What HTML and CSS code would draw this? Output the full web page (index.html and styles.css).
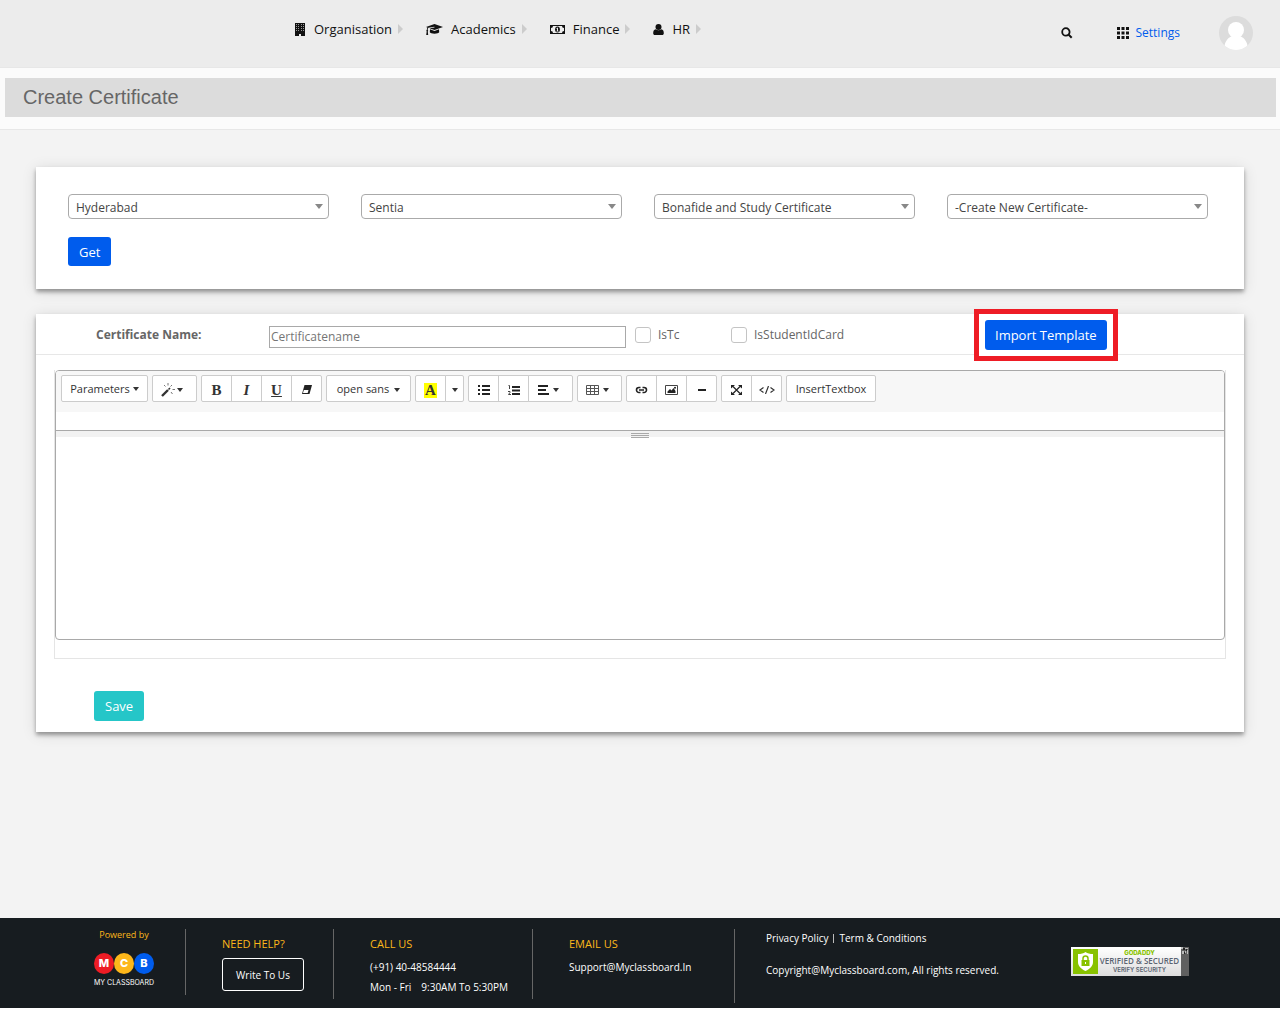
FILE: index.html
```html
<!DOCTYPE html>
<html lang="en">
<head>
    <meta charset="UTF-8">
    <meta name="viewport" content="width=device-width, initial-scale=1.0">
    <title>Create Certificate</title>
    <link rel="stylesheet" href="styles.css">
</head>
<body>
    <header class="topbar">
        <nav class="main-nav">
            <a href="#">
                <svg width="12" height="13" viewBox="0 0 12 13"><path fill="#111" d="M1 0h10v13H7v-2H5v2H1z"/><path fill="#999" d="M2 1h1v1H2zM4 1h1v1H4zM7 1h1v1H7zM9 1h1v1H9zM2 3h1v1H2zM4 3h1v1H4zM7 3h1v1H7zM9 3h1v1H9zM2 5h1v1H2zM4 5h1v1H4zM7 5h1v1H7zM9 5h1v1H9zM2 7h1v1H2zM4 7h1v1H4zM7 7h1v1H7zM9 7h1v1H9z"/></svg>
                <span>Organisation</span><i class="nav-arrow"></i>
            </a>
            <a href="#">
                <svg width="17" height="13" viewBox="0 0 17 13"><path fill="#111" d="M8.500 1L17 4 8.500 7 3.500 5.200l5-.8-.1-.6-6 1c-.6.7-.7 1.500-.7 2.300.6.3.6 1 .1 1.400L2.200 12H.2l.5-3.500C.2 8 .2 7.400.8 7.100c0-.9.200-1.800.6-2.500L0 4z"/><path fill="#111" d="M4 6.300L8.500 8 13 6.300l.2 2.900c-.5 1.900-8.900 1.900-9.400 0z"/></svg>
                <span>Academics</span><i class="nav-arrow"></i>
            </a>
            <a href="#">
                <svg width="15" height="13" viewBox="0 0 15 13"><path fill="#111" fill-rule="evenodd" d="M0 2h15v9H0zM3 3a2 2 0 0 1-2 2v3a2 2 0 0 1 2 2h9a2 2 0 0 1 2-2V5a2 2 0 0 1-2-2z"/><ellipse cx="7.500" cy="6.500" rx="2.400" ry="2.900" fill="#111"/><path fill="#ececec" d="M7 4.700h1v3h.6v.7H6.400v-.7H7V5.800h-.6v-.6z"/></svg>
                <span>Finance</span><i class="nav-arrow"></i>
            </a>
            <a href="#">
                <svg width="11" height="13" viewBox="0 0 11 13"><circle cx="5.500" cy="4" r="3" fill="#111"/><path fill="#111" d="M2.800 6.200c1.500 1.400 3.900 1.400 5.400 0 2 .2 2.600 2 2.600 4 0 1.200-.7 1.800-1.600 1.800H1.800C.9 12 .2 11.400.2 10.200c0-2 .6-3.800 2.600-4z"/></svg>
                <span>HR</span><i class="nav-arrow"></i>
            </a>
        </nav>
        <div class="topbar-right">
            <button class="icon-button" aria-label="Search">
                <svg width="12" height="12" viewBox="0 0 12 12" fill="none" stroke="#111"><circle cx="4.900" cy="4.900" r="3.700" stroke-width="1.800"/><path stroke-width="2" d="M7.700 7.700l3 3"/></svg>
            </button>
            <a class="settings" href="#">
                <svg width="12" height="12" viewBox="0 0 12 12"><path fill="#111" d="M0 0h3v3H0zM4.500 0h3v3h-3zM9 0h3v3H9zM0 4.500h3v3H0zM4.500 4.500h3v3h-3zM9 4.500h3v3H9zM0 9h3v3H0zM4.500 9h3v3h-3zM9 9h3v3H9z"/></svg>
                <span>Settings</span>
            </a>
            <svg class="avatar" width="34" height="34" viewBox="0 0 34 34"><clipPath id="round"><circle cx="17" cy="17" r="17"/></clipPath><g clip-path="url(#round)"><path fill="#dcdcdc" d="M0 0h34v34H0z"/><circle cx="17" cy="14" r="8" fill="#fff"/><path fill="#fff" d="M5 34c0-7 3-12 8-14h8c5 2 8 7 8 14z"/></g></svg>
        </div>
    </header>

    <div class="title-bar">
        <h1>Create Certificate</h1>
    </div>

    <main>
        <section class="card filter-card">
            <div class="filters">
                <div class="select-box"><select aria-label="City"><option>Hyderabad</option></select></div>
                <div class="select-box"><select aria-label="Branch"><option>Sentia</option></select></div>
                <div class="select-box"><select aria-label="Certificate type"><option>Bonafide and Study Certificate</option></select></div>
                <div class="select-box"><select aria-label="Certificate"><option>-Create New Certificate-</option></select></div>
            </div>
            <button class="btn btn-blue">Get</button>
        </section>

        <section class="card editor-card">
            <div class="name-row">
                <label class="name-label" for="certName">Certificate Name:</label>
                <input class="name-input" type="text" id="certName" placeholder="Certificatename">
                <label class="check is-tc"><input type="checkbox"><span>IsTc</span></label>
                <label class="check is-card"><input type="checkbox"><span>IsStudentIdCard</span></label>
                <div class="highlight"><button class="btn btn-blue btn-import">Import Template</button></div>
            </div>

            <div class="editor-wrap">
                <div class="editor">
                    <div class="toolbar">
                        <div class="group"><button class="w-params">Parameters<i class="caret big"></i></button></div>
                        <div class="group"><button class="w-drop" aria-label="Style">
                            <svg width="15" height="14" viewBox="0 0 15 14" stroke="#333" fill="none"><path stroke-width="2.400" d="M1 13l6-6"/><path stroke-width="1.600" d="M7.500 6.500L9 5"/><path stroke="#777" d="M3 2l1.500 1.500M7 0v2.500M11 2L9.500 3.500M11.500 6.500H14M10 9l1.500 2"/></svg><i class="caret"></i></button></div>
                        <div class="group">
                            <button class="serif">B</button>
                            <button class="serif italic">I</button>
                            <button class="serif underline">U</button>
                            <button aria-label="Clear"><svg width="10" height="10" viewBox="0 0 10 10"><path fill="#222" d="M2.500 0H10L7.500 9H0z"/><path fill="#fff" d="M1.800 5h4.700L5.700 8H1z"/></svg></button>
                        </div>
                        <div class="group"><button class="w-font">open sans<i class="caret"></i></button></div>
                        <div class="group">
                            <button class="serif"><span class="mark">A</span></button>
                            <button class="w-caret" aria-label="More colors"><i class="caret"></i></button>
                        </div>
                        <div class="group">
                            <button aria-label="Bullet list"><svg width="12" height="10" viewBox="0 0 12 10"><path fill="#222" d="M0 0h2v2H0zM0 4h2v2H0zM0 8h2v2H0zM4 0h8v2H4zM4 4h8v2H4zM4 8h8v2H4z"/></svg></button>
                            <button aria-label="Numbered list"><svg width="12" height="10" viewBox="0 0 12 10"><path fill="#222" d="M4 1h8v2H4zM4 4.500h8v2H4zM4 8h8v2H4z"/><path fill="none" stroke="#444" d="M.5.500h1V4M0 6.500h2v1L.5 9.500H3"/></svg></button>
                            <button class="w-drop" aria-label="Paragraph"><svg width="11" height="10" viewBox="0 0 11 10"><path fill="#222" d="M0 0h10v2H0zM0 4h8v2H0zM0 8h11v2H0z"/></svg><i class="caret wide"></i></button>
                        </div>
                        <div class="group"><button class="w-drop" aria-label="Table"><svg width="13" height="10" viewBox="0 0 13 10"><path fill="none" stroke="#555" d="M.5.500h12v9H.5zM0 3.500h13M0 6.500h13M4.500 0v10M8.500 0v10"/></svg><i class="caret wide"></i></button></div>
                        <div class="group">
                            <button aria-label="Link"><svg width="13" height="8" viewBox="0 0 13 8"><path fill="none" stroke="#222" stroke-width="1.600" d="M5.500 6.500H4a2.500 2.500 0 0 1 0-5h1.500M7.500 1.500H9a2.500 2.500 0 0 1 0 5H7.500M4 4h5"/></svg></button>
                            <button aria-label="Picture"><svg width="13" height="10" viewBox="0 0 13 10"><path fill="none" stroke="#444" d="M.5.500h12v9H.5z"/><path fill="#222" d="M2.500 8V6.500L5 4l1.500 1.500L8.500 3l2 3v2z"/><circle cx="10" cy="2.700" r="1" fill="#222"/></svg></button>
                            <button aria-label="Rule"><svg width="8" height="2" viewBox="0 0 8 2"><path fill="#222" d="M0 0h8v2H0z"/></svg></button>
                        </div>
                        <div class="group">
                            <button aria-label="Full screen"><svg width="11" height="10" viewBox="0 0 11 10"><path stroke="#222" stroke-width="1.200" d="M2 1.500l7 7M9 1.500l-7 7"/><path fill="#222" d="M0 0h4L0 3.600zM11 0v3.600L7 0zM0 10V6.400L4 10zM11 10H7l4-3.600z"/></svg></button>
                            <button aria-label="Code view"><svg width="16" height="8" viewBox="0 0 16 8"><path fill="none" stroke="#333" stroke-width="1.200" d="M4.500 1.500L1 4l3.500 2.500M11.500 1.500L15 4l-3.500 2.500M9.500 0l-3 8"/></svg></button>
                        </div>
                        <div class="group"><button class="w-insert">InsertTextbox</button></div>
                    </div>
                    <div class="ruler"></div>
                    <div class="resize-bar"><span></span><span></span><span></span></div>
                    <div class="edit-area" contenteditable="true"></div>
                </div>
            </div>
            <button class="btn btn-save">Save</button>
        </section>
    </main>

    <footer>
        <div class="col powered">
            <p class="small-title">Powered by</p>
            <div class="balls"><span class="red">M</span><span class="yellow">C</span><span class="blue">B</span></div>
            <p class="brand">MY CLASSBOARD</p>
        </div>
        <div class="col help">
            <h2>NEED HELP?</h2>
            <button class="write">Write To Us</button>
        </div>
        <div class="col call">
            <h2>CALL US</h2>
            <p>(+91) 40-48584444</p>
            <p class="hours"><span>Mon - Fri</span><span>9:30AM To 5:30PM</span></p>
        </div>
        <div class="col email">
            <h2>EMAIL US</h2>
            <p>Support@Myclassboard.In</p>
        </div>
        <div class="legal">
            <p><a href="#">Privacy Policy</a><i class="bar"></i><a href="#">Term &amp; Conditions</a></p>
            <p>Copyright@Myclassboard.com, All rights reserved.</p>
        </div>
        <div class="seal">
            <svg width="25" height="25" viewBox="0 0 25 25"><path fill="#88c200" d="M0 0h25v25H0z"/><path fill="#fff" d="M12.500 3c2 1.500 4.500 2 7.500 2v8c0 4-3 7-7.500 9C8 20 5 17 5 13V5c3 0 5.500-.5 7.500-2z"/><path fill="#88c200" d="M8.500 11h8v6h-8z"/><path fill="none" stroke="#88c200" stroke-width="1.500" d="M10 11V9.500a2.500 2.500 0 0 1 5 0V11"/><path fill="#fff" d="M12 13h1v2h-1z"/></svg>
            <div class="seal-text">
                <span class="seal-top">GODADDY</span>
                <span class="seal-mid">VERIFIED &amp; SECURED</span>
                <span class="seal-low">VERIFY SECURITY</span>
            </div>
            <svg class="seal-edge" width="8" height="29" viewBox="0 0 8 29"><path fill="#606060" d="M0 0h8v29H0z"/><path fill="#bbb" d="M0 0h2v2H0zM4 1h3v1H4zM1 4h2v3H1zM4 4h1v2H4zM6 3h1v4H6z"/><path fill="#222" d="M2 1h2v2H2zM5 2h1v2H5zM3 5h1v2H3z"/></svg>
        </div>
    </footer>
</body>
</html>
```
FILE: styles.css
```css
* { box-sizing: border-box; }
body {
    margin: 0;
    min-height: 100vh;
    display: flex;
    flex-direction: column;
    background-color: #f3f3f3;
    font-family: "Open Sans", sans-serif;
    font-size: 12px;
    line-height: 18px;
    color: #666;
}
h1, h2, p { margin: 0; font-weight: 400; }
a { color: inherit; text-decoration: none; }
button, input, select { font: inherit; color: inherit; margin: 0; }
button { cursor: pointer; padding: 0; }
svg { display: block; flex: none; }

/* top bar */
.topbar {
    display: flex;
    justify-content: space-between;
    height: 68px;
    padding: 0 27px 0 294px;
    background-color: #ececec;
    border-bottom: 1px solid #e7e7e7;
}
.main-nav {
    display: flex;
    gap: 23px;
    height: 58px;
    font-size: 13px;
    color: #111;
}
.main-nav a { display: flex; align-items: center; }
.main-nav span { margin: 0 6px 0 8px; }
.nav-arrow {
    border: 5px solid transparent;
    border-left-color: #ccc;
    border-right: 0;
}
.topbar-right {
    display: flex;
    align-items: center;
    height: 66px;
}
.icon-button {
    border: 0;
    background: none;
    margin-right: 44px;
}
.settings {
    display: flex;
    align-items: center;
    gap: 7px;
    margin-right: 39px;
    color: #005ced;
}

/* page title */
.title-bar {
    padding: 10px 4px 12px 5px;
    background-color: #fbfbfb;
    border-bottom: 1px solid #e7e7e7;
}
h1 {
    padding-left: 18px;
    background-color: #dcdcdc;
    font-family: "Liberation Sans", Arial, sans-serif;
    font-size: 20px;
    line-height: 39px;
}

main { flex: 1; padding: 37px 36px; }
.card {
    background-color: #fff;
    box-shadow: 0 3px 4px rgba(0, 0, 0, 0.35), 0 2px 14px rgba(0, 0, 0, 0.12);
}

/* filters */
.filter-card {
    padding: 27px 36px 23px 32px;
    margin-bottom: 25px;
}
.filters {
    display: grid;
    grid-template-columns: repeat(4, 1fr);
    gap: 32px;
    margin-bottom: 18px;
}
.select-box { position: relative; }
.select-box::after {
    content: "";
    position: absolute;
    right: 6px;
    top: 10px;
    border: 4px solid transparent;
    border-top: 5px solid #888;
    border-bottom: 0;
    pointer-events: none;
}
select {
    display: block;
    width: 100%;
    height: 25px;
    padding: 2px 7px 0;
    appearance: none;
    border: 1px solid #aaa;
    border-radius: 4px;
    background-color: #fff;
    color: #444;
}
.btn {
    display: block;
    height: 30px;
    padding: 0 11px;
    border: 0;
    border-radius: 3px;
    font-size: 13px;
    font-weight: 500;
    color: #fff;
}
.filter-card .btn { height: 29px; }
.btn-blue { background-color: #005ced; }
.btn-save {
    margin: 32px 0 0 58px;
    background-color: #25c6c8;
}

/* certificate name row */
.editor-card { padding-bottom: 11px; }
.name-row {
    display: flex;
    align-items: center;
    height: 41px;
    padding: 2px 0 0 60px;
    border-bottom: 1px solid #e7e7e7;
}
.name-label {
    width: 173px;
    font-weight: 700;
}
.name-input {
    width: 357px;
    height: 22px;
    margin-top: 3px;
    padding: 1px;
    border: 1px solid #a9a9a9;
    background-color: #fff;
}
.name-input::placeholder { color: #757575; opacity: 1; }
.check {
    display: flex;
    align-items: center;
    gap: 7px;
    margin-left: 9px;
}
.check input {
    appearance: none;
    width: 16px;
    height: 16px;
    border: 1px solid #c4c4c4;
    border-radius: 3px;
    background-color: #fff;
}
.is-tc { width: 87px; }
.is-card { width: 243px; }
.highlight {
    flex: none;
    padding: 6px;
    border: 5px solid #ee1c25;
    background-color: #fff;
}
.btn-import { padding: 0 10px; }

/* editor */
.editor-wrap {
    margin: 15px 18px 0;
    padding-bottom: 18px;
    border: 1px solid #e5e5e5;
    border-top: 0;
}
.editor {
    border: 1px solid #a9a9a9;
    border-radius: 4px;
    overflow: hidden;
}
.toolbar {
    display: flex;
    gap: 4px;
    padding: 4px 5px 10px;
    background-color: #f7f7f7;
    font-size: 11px;
    color: #333;
}
.group { display: flex; }
.toolbar button {
    display: flex;
    align-items: center;
    justify-content: center;
    width: 31px;
    height: 27px;
    border: 1px solid #ccc;
    background-color: #fff;
}
.toolbar button svg { margin-top: 2px; }
.toolbar button + button { margin-left: -1px; }
.toolbar button:first-child { border-radius: 2px 0 0 2px; }
.toolbar button:last-child { border-radius: 0 2px 2px 0; }
.toolbar button:only-child { border-radius: 2px; }
.toolbar .w-params { width: 87px; }
.toolbar .w-drop { width: 45px; padding-right: 5px; }
.toolbar .w-font { width: 85px; }
.toolbar .w-caret { width: 19px; }
.toolbar .w-insert { width: 90px; }
.toolbar .serif {
    padding-top: 3px;
    font-family: "Liberation Serif", serif;
    font-size: 15px;
    font-weight: 700;
}
.toolbar .italic { font-style: italic; }
.toolbar .underline { text-decoration: underline; }
.mark {
    padding: 0 1px;
    line-height: 15px;
    background-color: #ff0;
}
.caret {
    margin: 2px 0 0 5px;
    border: 3px solid transparent;
    border-top: 4px solid #333;
    border-bottom: 0;
}
.caret.big { margin: 0 0 0 3px; }
.w-drop .caret { margin-left: 1px; }
.w-drop .caret.wide { margin-left: 4px; }
.w-caret .caret { margin-left: 0; }
.ruler {
    height: 19px;
    border-bottom: 1px solid #a9a9a9;
}
.resize-bar {
    display: flex;
    flex-direction: column;
    align-items: center;
    gap: 1px;
    height: 6px;
    padding-top: 2px;
    background-color: #f2f2f2;
}
.resize-bar span {
    flex: none;
    width: 18px;
    height: 1px;
    background-color: #a9a9a9;
}
.edit-area { min-height: 202px; }

/* footer */
footer {
    display: flex;
    height: 91px;
    padding: 11px 91px 0 63px;
    background-color: #171c20;
    border-bottom: 1px solid #fff;
    font-size: 10px;
    line-height: 20px;
    color: #fff;
}
.col {
    padding: 5px 0 0 36px;
    border-right: 1px solid #666;
    height: 70px;
}
h2 {
    font-size: 11px;
    line-height: 20px;
    color: #fdb71a;
}
.powered {
    display: flex;
    flex-direction: column;
    align-items: center;
    width: 123px;
    height: 66px;
    padding: 0;
}
.small-title {
    font-size: 9px;
    line-height: 12px;
    color: #fdb71a;
}
.balls {
    display: flex;
    margin-top: 12px;
}
.balls span {
    width: 20px;
    height: 21px;
    border-radius: 50%;
    text-align: center;
    font-family: Inter, sans-serif;
    font-weight: 800;
    font-size: 11px;
}
.red { background-color: #ee1c25; }
.yellow { background-color: #fdb71a; }
.blue { background-color: #005ced; }
.brand {
    margin-top: 3px;
    font-family: Inter, sans-serif;
    font-size: 7px;
    line-height: 12px;
}
.help { width: 148px; }
.write {
    display: block;
    width: 82px;
    height: 33px;
    margin-top: 4px;
    border: 1px solid #fff;
    border-radius: 3px;
    background: none;
}
.call { width: 199px; }
.call h2, .email h2 { margin-bottom: 3px; }
.hours { display: flex; gap: 10px; }
.email { width: 202px; }
.legal {
    flex: 1;
    height: 74px;
    margin-left: -1px;
    padding-left: 31px;
    border-left: 1px solid #666;
    line-height: 18px;
}
.legal p { display: flex; align-items: center; margin-bottom: 14px; }
.bar {
    width: 1px;
    height: 9px;
    margin: 0 5px;
    background-color: #bbb;
}
.seal {
    display: flex;
    height: 29px;
    margin-top: 18px;
    padding: 2px 0 2px 2px;
    background: linear-gradient(#fff, #ddd);
}
.seal-text {
    display: flex;
    flex-direction: column;
    align-items: center;
    width: 83px;
    line-height: 8px;
    color: #5a6472;
}
.seal-top { font-family: Inter, sans-serif; font-size: 6px; font-weight: 800; line-height: 7px; color: #88c200; }
.seal-mid { font-family: "Open Sans", sans-serif; font-size: 8px; font-weight: 600; line-height: 10px; white-space: nowrap; }
.seal-low { font-family: Inter, sans-serif; font-size: 6px; font-weight: 600; }
.seal-edge { margin: -2px 0; }
```
